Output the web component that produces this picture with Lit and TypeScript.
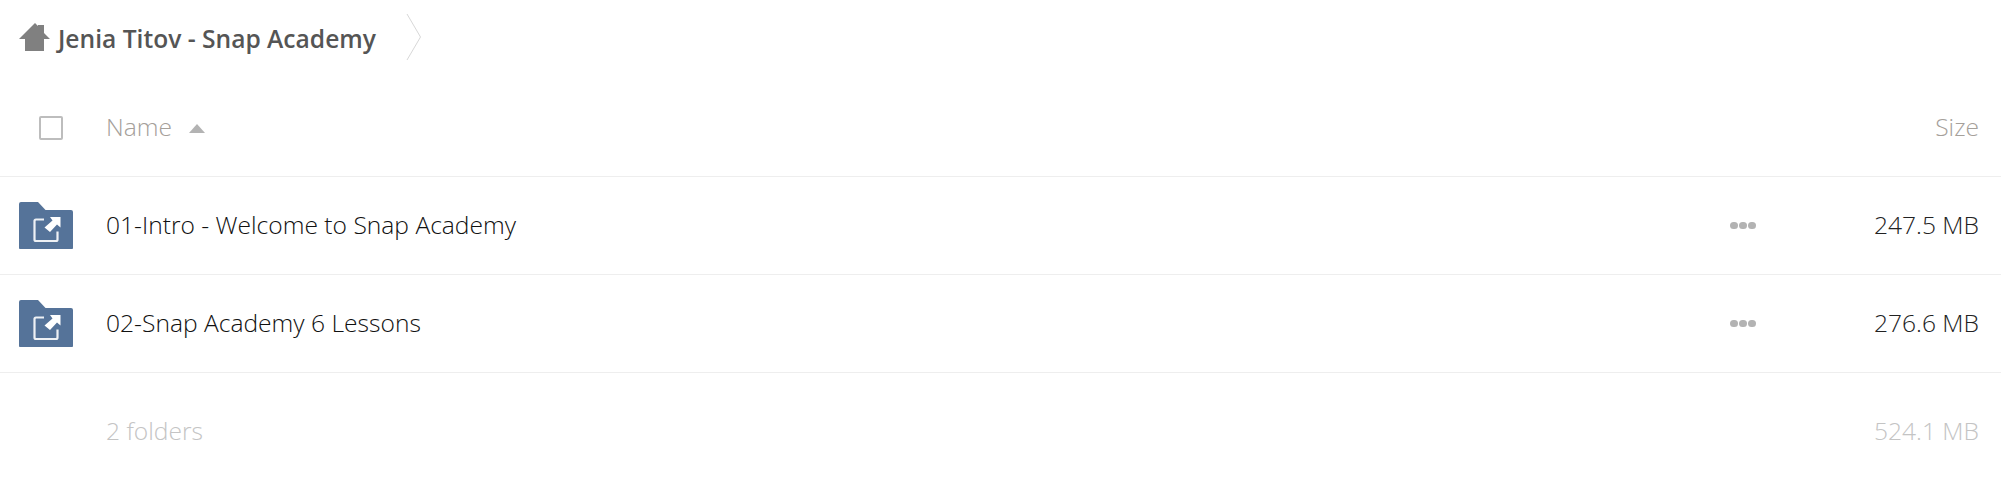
import { LitElement, html, css, svg } from "lit";
import { customElement } from "lit/decorators.js";

const rows = [
  { name: "01-Intro - Welcome to Snap Academy", size: "247.5 MB" },
  { name: "02-Snap Academy 6 Lessons", size: "276.6 MB" },
];

const folder = svg`<path d="M2 0H19L26.5 8H52Q54 8 54 10V45.5Q54 47.5 52 47.5H2Q0 47.5 0 45.5V2Q0 0 2 0Z" fill="#557399"/>
<path d="M25 17.5H17Q15.5 17.5 15.5 19V37.5Q15.5 39 17 39H37Q38.5 39 38.5 37.5V29.5" fill="none" stroke="#eef1f5" stroke-width="2.2"/>
<path d="M31 15H41.5V25.5L38 22.5L31 30L25.5 25.5L33.5 18.5Z" fill="#fff"/>`;

@customElement("app-root")
export class AppRoot extends LitElement {
  static styles = css`
    :host { display: block; background: #fff; font-family: "Open Sans", sans-serif; height: 497px; overflow: hidden; }
    .crumbs { height: 77px; display: flex; align-items: center; padding-left: 19px; }
    .home { width: 31px; height: 28px; display: block; margin-top: -3px; }
    .title { font-size: 24.6px; font-weight: 600; color: #555; margin-left: 8px; line-height: 77px; }
    .chev { width: 16px; height: 48px; margin-left: 30px; margin-top: -3px; display: block; }
    .row { display: grid; grid-template-columns: 104px 1fr 84px 165px; align-items: center; height: 97px; border-bottom: 1px solid #eeeeee; padding-right: 22px; }
    .head { height: 99px; color: #a5a09a; font-weight: 300; font-size: 24.6px; }
    .check { width: 20px; height: 20px; margin: 3px 0 0 39px; border: 2px solid #bdbdbd; border-radius: 2px; }
    .namehead { display: flex; align-items: center; gap: 17px; padding-left: 2px; }
    .caret { width: 0; height: 0; border-left: 8px solid transparent; border-right: 8px solid transparent; border-bottom: 9px solid #b3b3b3; margin-top: 4px; }
    .icon { width: 54px; height: 47.5px; margin-left: 19px; display: block; }
    .name { font-size: 24.6px; font-weight: 300; color: #111; padding: 0 0 2px 2px; }
    .size { font-size: 24.6px; font-weight: 300; color: #222; text-align: right; padding-bottom: 2px; }
    .dots { display: flex; gap: 1.5px; }
    .dots i { width: 7.5px; height: 7.5px; border-radius: 50%; background: #b3b3b3; }
    .foot { height: 116px; border: none; }
    .foot .name, .foot .size { color: #c4c4c4; }
    .sizehead { grid-column: 4; text-align: right; }
  `;
  render() {
    return html`
      <div class="crumbs">
        <svg class="home" viewBox="0 0 31 28"><path d="M16 0L19 3V2H25V10L31 16H25V28H6V16H0Z" fill="#808080"/></svg>
        <span class="title">Jenia Titov - Snap Academy</span>
        <svg class="chev" viewBox="0 0 16 48"><path d="M1 1L14.5 24L1 47" fill="none" stroke="#d8d8d8" stroke-width="1"/></svg>
      </div>
      <div class="row head">
        <div class="check"></div>
        <div class="namehead"><span>Name</span><span class="caret"></span></div>
        <div class="sizehead">Size</div>
      </div>
      ${rows.map((r) => html`
        <div class="row">
          <svg class="icon" viewBox="0 0 54 47.5">${folder}</svg>
          <div class="name">${r.name}</div>
          <div class="dots"><i></i><i></i><i></i></div>
          <div class="size">${r.size}</div>
        </div>`)}
      <div class="row foot">
        <div></div>
        <div class="name">2 folders</div>
        <div></div>
        <div class="size">524.1 MB</div>
      </div>
    `;
  }
}
